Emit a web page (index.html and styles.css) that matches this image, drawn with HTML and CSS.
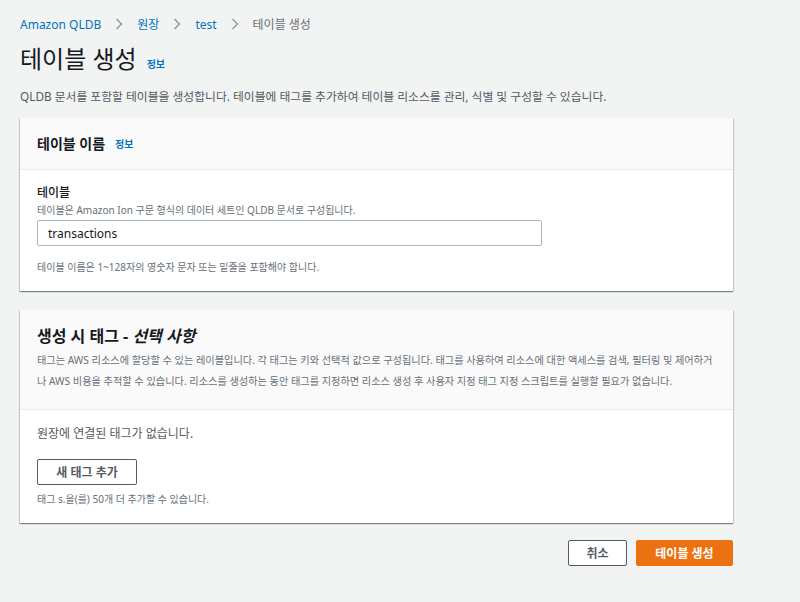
FILE: index.html
```html
<!DOCTYPE html>
<html lang="ko">
<head>
    <meta charset="UTF-8">
    <title>테이블 생성 - Amazon QLDB</title>
    <link rel="stylesheet" href="styles.css">
</head>
<body>
    <div class="page">
        <nav class="breadcrumbs">
            <a href="#">Amazon QLDB</a>
            <span class="sep"><svg width="8" height="12" viewBox="0 0 8 12"><path d="M1.5 1l5 5-5 5" fill="none" stroke="#879596" stroke-width="1.3"/></svg></span>
            <a href="#">원장</a>
            <span class="sep"><svg width="8" height="12" viewBox="0 0 8 12"><path d="M1.5 1l5 5-5 5" fill="none" stroke="#879596" stroke-width="1.3"/></svg></span>
            <a href="#">test</a>
            <span class="sep"><svg width="8" height="12" viewBox="0 0 8 12"><path d="M1.5 1l5 5-5 5" fill="none" stroke="#879596" stroke-width="1.3"/></svg></span>
            <span class="current">테이블 생성</span>
        </nav>

        <div class="page-header">
            <h1>테이블 생성</h1>
            <a href="#" class="info">정보</a>
        </div>
        <p class="page-desc">QLDB 문서를 포함할 테이블을 생성합니다. 테이블에 태그를 추가하여 테이블 리소스를 관리, 식별 및 구성할 수 있습니다.</p>

        <section class="card">
            <div class="card-header">
                <h2>테이블 이름</h2>
                <a href="#" class="info">정보</a>
            </div>
            <div class="card-body">
                <div class="field-label">테이블</div>
                <div class="field-desc">테이블은 Amazon Ion 구문 형식의 데이터 세트인 QLDB 문서로 구성됩니다.</div>
                <input class="text-input" type="text" value="transactions">
                <div class="field-hint">테이블 이름은 1~128자의 영숫자 문자 또는 밑줄을 포함해야 합니다.</div>
            </div>
        </section>

        <section class="card">
            <div class="card-header tall">
                <h2>생성 시 태그 - <em>선택 사항</em></h2>
                <p class="card-desc">태그는 AWS 리소스에 할당할 수 있는 레이블입니다. 각 태그는 키와 선택적 값으로 구성됩니다. 태그를 사용하여 리소스에 대한 액세스를 검색, 필터링 및 제어하거나 AWS 비용을 추적할 수 있습니다. 리소스를 생성하는 동안 태그를 지정하면 리소스 생성 후 사용자 지정 태그 지정 스크립트를 실행할 필요가 없습니다.</p>
            </div>
            <div class="card-body">
                <p class="empty">원장에 연결된 태그가 없습니다.</p>
                <button class="btn btn-normal">새 태그 추가</button>
                <div class="field-hint">태그 s.을(를) 50개 더 추가할 수 있습니다.</div>
            </div>
        </section>

        <div class="actions">
            <button class="btn btn-normal btn-cancel">취소</button>
            <button class="btn btn-primary">테이블 생성</button>
        </div>
    </div>
</body>
</html>
```

FILE: styles.css
```css
:root {
    --link-color: #0073bb;
    --text-color: #16191f;
    --muted-color: #687078;
    --border-color: #eaeded;
}
* {
    margin: 0;
    padding: 0;
    box-sizing: border-box;
}
body {
    font-family: 'Noto Sans', 'Noto Sans CJK KR', sans-serif;
    background: #f2f3f3;
    color: var(--text-color);
    font-size: 12px;
}
.page {
    width: 713px;
    margin-left: 20px;
    padding-top: 14px;
}
.breadcrumbs {
    display: flex;
    align-items: center;
    gap: 14px;
    height: 20px;
    font-size: 12px;
}
.breadcrumbs a {
    color: var(--link-color);
    text-decoration: none;
}
.breadcrumbs .sep {
    display: flex;
}
.breadcrumbs .current {
    color: var(--muted-color);
}
.page-header {
    display: flex;
    align-items: baseline;
    gap: 10px;
    margin-top: 9px;
}
h1 {
    font-size: 24px;
    font-weight: 400;
    line-height: 32px;
}
.info {
    color: var(--link-color);
    font-size: 10px;
    font-weight: 700;
    text-decoration: none;
}
.page-desc {
    color: #545b64;
    font-size: 11.8px;
    line-height: 20px;
    margin-top: 11px;
}
.card {
    background: white;
    box-shadow: 0 1px 1px 0 rgba(0,28,36,0.3), 1px 1px 1px 0 rgba(0,28,36,0.15), -1px 1px 1px 0 rgba(0,28,36,0.15);
    margin-top: 12px;
}
.card + .card {
    margin-top: 19px;
}
.card-header {
    background: #fafafa;
    border-bottom: 1px solid var(--border-color);
    height: 52px;
    padding: 0 17px;
    display: flex;
    align-items: center;
    gap: 10px;
}
.card-header.tall {
    height: 100px;
    display: block;
    padding-top: 14px;
}
h2 {
    font-size: 14px;
    font-weight: 700;
    line-height: 24px;
}
.card-header.tall h2 {
    font-size: 16px;
}
.card-desc {
    color: var(--muted-color);
    font-size: 10.2px;
    line-height: 21px;
    margin-top: 2px;
}
.card-body {
    padding: 14px 17px 16px;
}
.field-label {
    font-size: 12px;
    font-weight: 500;
    line-height: 18px;
}
.field-desc {
    color: var(--muted-color);
    font-size: 10px;
    line-height: 16px;
}
.text-input {
    display: block;
    width: 505px;
    height: 26px;
    margin-top: 2px;
    border: 1px solid #aab7b8;
    border-radius: 2px;
    padding: 0 10px;
    font-family: inherit;
    font-size: 12px;
    color: var(--text-color);
}
.field-hint {
    color: var(--muted-color);
    font-size: 10px;
    line-height: 16px;
    margin-top: 13px;
}
.card-body .btn + .field-hint {
    margin-top: 6px;
}
.empty {
    color: #545b64;
    font-size: 12px;
    line-height: 20px;
    margin-bottom: 15px;
}
.btn {
    font-family: inherit;
    font-size: 12px;
    font-weight: 700;
    height: 26px;
    border-radius: 2px;
    cursor: pointer;
}
.btn-normal {
    background: white;
    border: 1px solid #545b64;
    color: #545b64;
    width: 100px;
}
.btn-cancel {
    width: 59px;
}
.btn-primary {
    background: #ec7211;
    border: 1px solid #ec7211;
    color: white;
    width: 97px;
}
.actions {
    display: flex;
    justify-content: flex-end;
    gap: 9px;
    margin-top: 17px;
}
```
